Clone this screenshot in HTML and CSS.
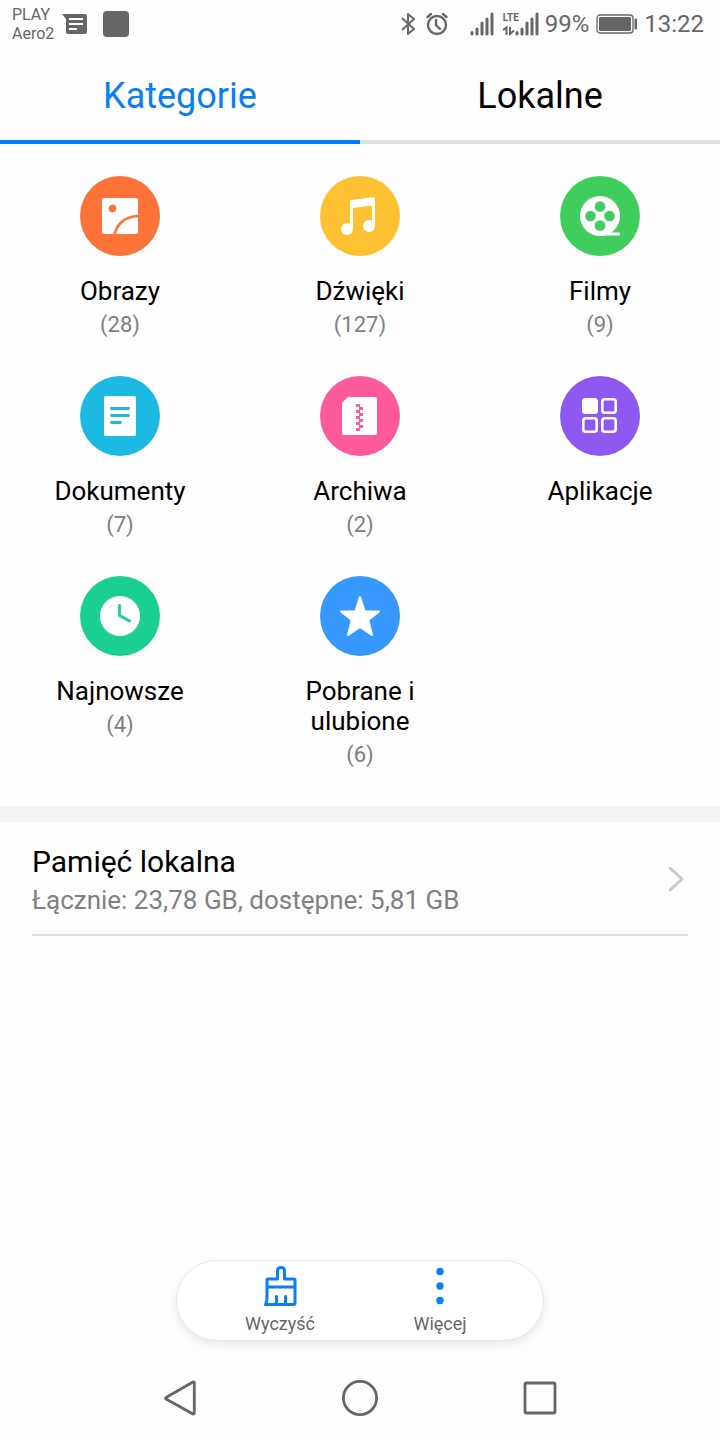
FILE: index.html
```html
<!DOCTYPE html>
<html lang="pl">
<head>
<meta charset="utf-8">
<meta name="viewport" content="width=device-width, initial-scale=1">
<title>Pliki</title>
<link rel="stylesheet" href="styles.css">
</head>
<body>
<header class="status">
  <div class="carrier"><span>PLAY</span><span>Aero2</span></div>
  <svg class="status-message" width="26" height="22" viewBox="0 0 26 22" aria-hidden="true">
    <path fill="#666" d="M0 1H23Q25 1 25 3V19Q25 21 23 21H6Q4 21 4 19V6Z"/>
    <path stroke="#fdfdfd" stroke-width="2" d="M7 6H21M7 11H21M7 16H15"/>
  </svg>
  <svg width="26" height="26" viewBox="0 0 26 26" aria-hidden="true"><rect width="26" height="26" rx="4" fill="#666"/></svg>
  <div class="status-right">
    <svg class="status-bluetooth" width="14" height="24" viewBox="0 0 14 24" aria-hidden="true">
      <path d="M1 6L13 17L7 22V2L13 7L1 18" fill="none" stroke="#666" stroke-width="2" stroke-linejoin="round"/>
    </svg>
    <svg class="status-alarm" width="22" height="24" viewBox="0 0 22 24" aria-hidden="true">
      <g fill="none" stroke="#666" stroke-width="2.400" stroke-linecap="round"><circle cx="11" cy="13" r="9"/><path d="M10 8V13L14 17M1.500 5L5 2M20.500 5L17 2"/></g>
    </svg>
    <svg class="status-signal" width="24" height="24" viewBox="0 0 24 24" aria-hidden="true">
      <path d="M2 20.500V22M7 17V22M12 11V22M17 7V22M22 2V22" stroke="#666" stroke-width="3" stroke-linecap="round"/>
    </svg>
    <div class="lte">
      <span class="lte-text">LTE</span>
      <svg width="36" height="24" viewBox="0 0 36 24" aria-hidden="true">
        <path d="M14 20.500V22M19 17V22M24 11V22M29 7V22M34 2V22" stroke="#666" stroke-width="3" stroke-linecap="round"/>
        <path d="M0 18L3.500 15.500V23M7 15V22L11 18.500" fill="none" stroke="#666" stroke-width="2"/>
      </svg>
    </div>
    <span class="battery-text">99%</span>
    <svg class="status-battery" width="42" height="20" viewBox="0 0 42 20" aria-hidden="true">
      <rect x="1" y="1" width="36" height="18" rx="3" fill="none" stroke="#666" stroke-width="1.300"/><rect x="3" y="3" width="32" height="14" rx="1" fill="#666"/><rect x="38.500" y="4.500" width="2.500" height="11" rx="1" fill="#666"/>
    </svg>
    <time>13:22</time>
  </div>
</header>

<nav class="tabs">
  <button class="tab tab-active" type="button">Kategorie</button>
  <button class="tab" type="button">Lokalne</button>
</nav>

<main class="content">
  <section class="categories">
    <button class="category" type="button">
      <svg class="category-icon" viewBox="0 0 80 80" aria-hidden="true"><circle cx="40" cy="40" r="40" fill="#fe7337"/><rect x="22" y="22" width="36" height="36" rx="2" fill="#fff"/><circle cx="32.500" cy="32.500" r="3.700" fill="#fe7337"/><path d="M34.500 58Q39.500 41 58 40" fill="none" stroke="#fe7337" stroke-width="2.600"/></svg>
      <span class="category-name">Obrazy</span><span class="category-count">(28)</span>
    </button>
    <button class="category" type="button">
      <svg class="category-icon" viewBox="0 0 80 80" aria-hidden="true"><circle cx="40" cy="40" r="40" fill="#fdc132"/><circle cx="27" cy="53" r="6" fill="#fff"/><circle cx="49" cy="50" r="6" fill="#fff"/><path fill="#fff" d="M30 25.500Q30 24.300 31.500 24L53 21.200Q55 21 55 22.800V50H52V29.600L33 32V53H30Z"/></svg>
      <span class="category-name">Dźwięki</span><span class="category-count">(127)</span>
    </button>
    <button class="category" type="button">
      <svg class="category-icon" viewBox="0 0 80 80" aria-hidden="true"><circle cx="40" cy="40" r="40" fill="#3fce5c"/><circle cx="40" cy="40" r="20" fill="#fff"/><path fill="#fff" d="M40 57H50L52 56.500H59Q60 56.500 60 58T59 59.600H40Z"/><g fill="#3fce5c"><circle cx="40" cy="30.500" r="5.300"/><circle cx="30.500" cy="40" r="5.300"/><circle cx="49.500" cy="40" r="5.300"/><circle cx="40" cy="49.500" r="5.300"/></g></svg>
      <span class="category-name">Filmy</span><span class="category-count">(9)</span>
    </button>
    <button class="category" type="button">
      <svg class="category-icon" viewBox="0 0 80 80" aria-hidden="true"><circle cx="40" cy="40" r="40" fill="#1cbae2"/><rect x="24" y="20" width="32" height="40" rx="2" fill="#fff"/><path d="M31.500 32.500H48.500M31.500 39.500H48.500M31.500 46.500H40.500" stroke="#1cbae2" stroke-width="2.800" stroke-linecap="round"/></svg>
      <span class="category-name">Dokumenty</span><span class="category-count">(7)</span>
    </button>
    <button class="category" type="button">
      <svg class="category-icon" viewBox="0 0 80 80" aria-hidden="true"><circle cx="40" cy="40" r="40" fill="#fe5999"/><path fill="#fff" d="M28 21H55Q57 21 57 23V57Q57 59 55 59H24Q22 59 22 57V27Z"/><path fill="#fe5999" d="M36 28h4v3h3v3h-3v3h3v3h-3v3h3v3h-3v3h3v3h-3v3h-4v-3h3v-3h-3v-3h3v-3h-3v-3h3v-3h-3v-3h3v-3h-3z"/></svg>
      <span class="category-name">Archiwa</span><span class="category-count">(2)</span>
    </button>
    <button class="category" type="button">
      <svg class="category-icon" viewBox="0 0 80 80" aria-hidden="true"><circle cx="40" cy="40" r="40" fill="#8f59f1"/><rect x="22" y="22" width="16" height="16" rx="3.500" fill="#fff"/><g fill="none" stroke="#fff" stroke-width="2.600"><rect x="42.300" y="23.300" width="13.400" height="13.400" rx="2.500"/><rect x="23.300" y="42.300" width="13.400" height="13.400" rx="2.500"/><rect x="42.300" y="42.300" width="13.400" height="13.400" rx="2.500"/></g></svg>
      <span class="category-name">Aplikacje</span>
    </button>
    <button class="category" type="button">
      <svg class="category-icon" viewBox="0 0 80 80" aria-hidden="true"><circle cx="40" cy="40" r="40" fill="#1bce91"/><circle cx="40" cy="40" r="20" fill="#fff"/><path d="M39.500 29.500V39.500L49.500 45" fill="none" stroke="#1bce91" stroke-width="2.800" stroke-linecap="round" stroke-linejoin="round"/></svg>
      <span class="category-name">Najnowsze</span><span class="category-count">(4)</span>
    </button>
    <button class="category" type="button">
      <svg class="category-icon" viewBox="0 0 80 80" aria-hidden="true"><circle cx="40" cy="40" r="40" fill="#3798fe"/><path fill="#fff" stroke="#fff" stroke-width="2" stroke-linejoin="round" d="M40 21L44.800 35.500H59L48.300 44L52 59L40 51L28 59L31.700 44L21 35.500H35.200Z"/></svg>
      <span class="category-name">Pobrane i ulubione</span><span class="category-count">(6)</span>
    </button>
  </section>

  <section class="storage">
    <button class="storage-row" type="button">
      <span class="storage-text"><span class="storage-name">Pamięć lokalna</span><span class="storage-info">Łącznie: 23,78 GB, dostępne: 5,81 GB</span></span>
      <svg width="16" height="26" viewBox="0 0 16 26" aria-hidden="true"><path d="M2 1L14 12L2 23" fill="none" stroke="#c8c8c8" stroke-width="2.800" stroke-linecap="round" stroke-linejoin="round"/></svg>
    </button>
  </section>
</main>

<div class="toolbar">
  <button class="tool" type="button">
    <svg width="36" height="42" viewBox="0 0 36 42" aria-hidden="true"><path d="M5 22V15Q5 14 6 14H15.500V5.500Q15.500 2.500 19 2.500T22.500 5.500V14H32Q33 14 33 15V38Q33 39.500 31.500 39.500H3.500Q5 37 5 33V22H33M14 39Q15 36 14.500 31.500M23 39Q24 36 23.500 31.500" fill="none" stroke="#0a7ff5" stroke-width="3" stroke-linecap="round" stroke-linejoin="round"/></svg>
    <span>Wyczyść</span>
  </button>
  <button class="tool" type="button">
    <svg width="36" height="42" viewBox="0 0 36 42" aria-hidden="true"><g fill="#0a7ff5"><circle cx="18" cy="6.500" r="3.700"/><circle cx="18" cy="21" r="3.700"/><circle cx="18" cy="35.500" r="3.700"/></g></svg>
    <span>Więcej</span>
  </button>
</div>

<nav class="system">
  <button class="system-key" type="button" aria-label="Wstecz"><svg width="40" height="40" viewBox="0 0 40 40"><path d="M6 19.500L33 4Q34.300 3.500 34.300 5V35Q34.300 36.500 33 36L6 21Q5 20.300 6 19.500Z" fill="none" stroke="#666" stroke-width="2.800" stroke-linejoin="round"/></svg></button>
  <button class="system-key" type="button" aria-label="Ekran główny"><svg width="40" height="40" viewBox="0 0 40 40"><circle cx="20" cy="20" r="16.600" fill="none" stroke="#666" stroke-width="2.800"/></svg></button>
  <button class="system-key" type="button" aria-label="Ostatnie"><svg width="40" height="40" viewBox="0 0 40 40"><rect x="5" y="5" width="30" height="30" rx="1.500" fill="none" stroke="#666" stroke-width="2.800"/></svg></button>
</nav>
</body>
</html>
```
FILE: styles.css
```css
* { box-sizing: border-box; }

body {
  margin: 0;
  min-height: 100vh;
  display: flex;
  flex-direction: column;
  background: #fdfdfd;
  color: #000;
  font-family: Roboto, "Noto Sans", sans-serif;
}

button {
  margin: 0;
  padding: 0;
  border: 0;
  background: none;
  color: inherit;
  font: inherit;
}

svg { display: block; flex: none; }

.status {
  height: 48px;
  display: flex;
  align-items: center;
  padding: 0 16px 0 12px;
  color: #666;
}

.carrier {
  width: 50px;
  display: flex;
  flex-direction: column;
  font-size: 16px;
  line-height: 19px;
}

.status-message { margin-right: 15px; }

.status-right {
  display: flex;
  align-items: center;
  margin-left: auto;
  font-size: 24px;
  line-height: 50px;
}

.status-bluetooth { margin-right: 11px; }
.status-alarm { margin-right: 22px; }
.status-signal { margin-right: 9px; }

.lte {
  position: relative;
  margin-right: 6px;
}

.lte-text {
  position: absolute;
  top: 0;
  left: 0;
  font-size: 10px;
  font-weight: 700;
  line-height: 12px;
}

.battery-text { margin-right: 7px; }
.status-battery { margin-right: 6px; }

.tabs {
  display: flex;
  height: 96px;
}

.tab {
  flex: 1;
  padding-top: 4px;
  border-bottom: 4px solid #e1e1e1;
  font-size: 36px;
  line-height: 88px;
}

.tab-active {
  border-color: #007dff;
  color: #0a7ff5;
}

.content { flex: 1; }

.categories {
  display: grid;
  grid-template-columns: repeat(3, 1fr);
  row-gap: 32px;
  padding: 32px 0;
  border-bottom: 16px solid #f5f5f5;
}

.category {
  display: flex;
  flex-direction: column;
  align-items: center;
  padding: 0 48px;
}

.category-icon {
  width: 80px;
  height: 80px;
  margin-bottom: 20px;
}

.category-name {
  font-size: 26px;
  line-height: 30px;
}

.category-count {
  color: #808080;
  font-size: 22px;
  line-height: 38px;
}

.storage { padding: 0 32px; }

.storage-row {
  width: 100%;
  display: flex;
  align-items: center;
  justify-content: space-between;
  padding: 20px 4px 16px 0;
  border-bottom: 2px solid #e1e1e1;
  text-align: left;
}

.storage-text {
  display: flex;
  flex-direction: column;
}

.storage-name {
  font-size: 30px;
  line-height: 40px;
}

.storage-info {
  color: #808080;
  font-size: 26px;
  line-height: 36px;
}

.toolbar {
  display: flex;
  margin: 0 auto 15px;
  padding: 0 23px;
  border: 1px solid #e6e6e6;
  border-radius: 41px;
  background: #fff;
  box-shadow: 0 4px 8px rgba(0, 0, 0, 0.08);
}

.tool {
  width: 160px;
  height: 79px;
  display: flex;
  flex-direction: column;
  align-items: center;
  padding-top: 4px;
  color: #666;
  font-size: 18px;
  line-height: 33px;
}

.system {
  height: 84px;
  display: grid;
  grid-template-columns: repeat(3, 1fr);
  padding: 0 12.5%;
}

.system-key {
  display: flex;
  align-items: center;
  justify-content: center;
}
```
